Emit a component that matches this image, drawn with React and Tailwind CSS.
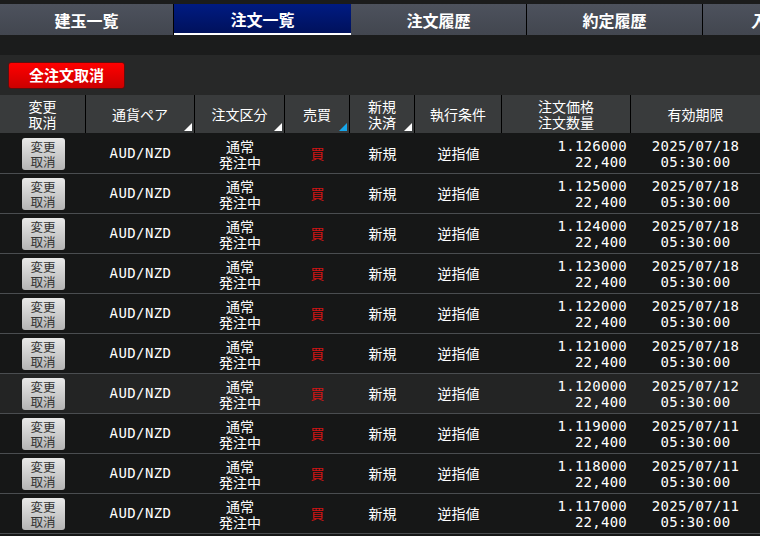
import React from 'react';

const tabs = [
  { label: '建玉一覧', w: 'w-[174px] border-r border-black' },
  { label: '注文一覧', w: 'w-[177px]', active: true },
  { label: '注文履歴', w: 'w-[176px] border-r border-black' },
  { label: '約定履歴', w: 'w-[176px] border-r border-black' },
  { label: '入出金履歴', w: 'w-[176px]' },
];

const cols = 'grid grid-cols-[86px_109px_90px_65px_65px_87px_129px_1fr]';

const orders = [
  { price: '1.126000', date: '2025/07/18' },
  { price: '1.125000', date: '2025/07/18' },
  { price: '1.124000', date: '2025/07/18' },
  { price: '1.123000', date: '2025/07/18' },
  { price: '1.122000', date: '2025/07/18' },
  { price: '1.121000', date: '2025/07/18' },
  { price: '1.120000', date: '2025/07/12', hover: true },
  { price: '1.119000', date: '2025/07/11' },
  { price: '1.118000', date: '2025/07/11' },
  { price: '1.117000', date: '2025/07/11' },
];

const jp = "font-['Noto_Sans_CJK_JP',sans-serif]";
const mono = "font-['DejaVu_Sans_Mono','Noto_Sans_CJK_JP',monospace]";

function HeadCell({ children, corner, blue, last }) {
  return (
    <div
      className={`relative flex items-center justify-center text-center leading-[16px] ${
        last ? '' : 'border-r border-black'
      }`}
    >
      {children}
      {corner && (
        <svg width="8" height="8" viewBox="0 0 8 8" className="absolute bottom-[2px] right-[2px]">
          <polygon points="8,0 8,8 0,8" fill={blue ? '#17a7ec' : '#ffffff'} />
        </svg>
      )}
    </div>
  );
}

export default function App() {
  return (
    <div className={`h-[536px] w-[760px] overflow-hidden bg-[#161717] text-white ${jp}`}>
      <div className="flex h-[35px] border-t-[4px] border-[#1b1c1c] bg-[#1b1c1c]">
        {tabs.map((t) => (
          <div
            key={t.label}
            className={`flex shrink-0 items-center justify-center whitespace-nowrap text-[16px] font-bold ${t.w} ${
              t.active
                ? 'border-b-[2px] border-white bg-gradient-to-b from-[#001b82] to-[#00115c]'
                : 'bg-gradient-to-b from-[#4d525d] to-[#42464f]'
            }`}
          >
            {t.label}
          </div>
        ))}
      </div>
      <div className="h-[20px] bg-[#1b1c1c]" />
      <div className="flex h-[40px] items-center bg-[#272828] pl-[8px]">
        <button className="flex h-[27px] w-[117px] items-center justify-center rounded-[3px] border border-[#5a1010] bg-gradient-to-b from-[#ff0000] to-[#cc0000] text-[15px] font-bold text-white">
          全注文取消
        </button>
      </div>
      <div className={`${cols} h-[39px] border-b border-[#161717] bg-[#393b3c] text-[14px]`}>
        <HeadCell>
          変更
          <br />
          取消
        </HeadCell>
        <HeadCell corner>通貨ペア</HeadCell>
        <HeadCell corner>注文区分</HeadCell>
        <HeadCell corner blue>
          売買
        </HeadCell>
        <HeadCell corner>
          新規
          <br />
          決済
        </HeadCell>
        <HeadCell>執行条件</HeadCell>
        <HeadCell>
          注文価格
          <br />
          注文数量
        </HeadCell>
        <HeadCell last>有効期限</HeadCell>
      </div>
      {orders.map((o) => (
        <div
          key={o.price}
          className={`${cols} h-[40px] border-b border-[#4a4d50] text-[14px] ${
            o.hover ? 'bg-[#232424]' : 'bg-[#161717]'
          }`}
        >
          <div className="flex items-center justify-center">
            <button className="flex h-[32px] w-[43px] flex-col items-center justify-center rounded-[3px] bg-gradient-to-b from-[#e8e8e8] to-[#b4b4b4] text-[12.5px] leading-[15px] text-[#333]">
              <span>変更</span>
              <span>取消</span>
            </button>
          </div>
          <div className={`flex items-center justify-center ${mono} font-medium tracking-[0.4px]`}>
            AUD/NZD
          </div>
          <div className="flex flex-col items-center justify-center leading-[16px]">
            <span>通常</span>
            <span>発注中</span>
          </div>
          <div className="flex items-center justify-center font-normal text-[#d01414]">買</div>
          <div className="flex items-center justify-center">新規</div>
          <div className="flex items-center justify-center">逆指値</div>
          <div className={`flex flex-col items-end justify-center pr-[4px] leading-[16px] ${mono} tracking-[0.25px]`}>
            <span>{o.price}</span>
            <span>22,400</span>
          </div>
          <div className={`flex flex-col items-center justify-center leading-[16px] ${mono} tracking-[0.3px]`}>
            <span>{o.date}</span>
            <span>05:30:00</span>
          </div>
        </div>
      ))}
    </div>
  );
}
